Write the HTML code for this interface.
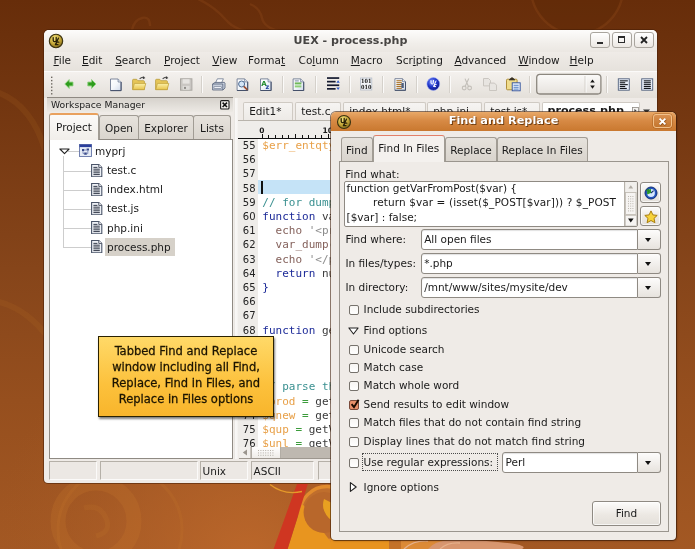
<!DOCTYPE html>
<html lang="en">
<head>
<meta charset="utf-8">
<title>UEX - process.php</title>
<style>
*{box-sizing:border-box;margin:0;padding:0}
html,body{width:695px;height:549px;overflow:hidden}
body{position:relative;font-family:"DejaVu Sans","Liberation Sans",sans-serif;font-size:10.5px;color:#1a1a1a;
 background:#8a471b}
.abs{position:absolute}
#bg{position:absolute;left:0;top:0;width:695px;height:549px}
/* ---------- main window ---------- */
#win{will-change:transform;position:absolute;left:44px;top:30px;width:613px;height:453px;background:#efebe7;border-radius:5px 5px 4px 4px;
 box-shadow:0 0 0 1px rgba(70,30,5,.55)}
#titlebar{position:absolute;left:0;top:0;width:613px;height:22px;border-radius:5px 5px 0 0;
 background:linear-gradient(#fdfcfb,#f1eeea 60%,#ebe7e2)}
#title{position:absolute;left:0;top:4px;width:613px;text-align:center;font-weight:bold;font-size:11.1px;color:#474543;letter-spacing:0}
.wbtn{position:absolute;top:2px;width:20px;height:16px;border:1px solid #a9a59e;border-radius:3px;
 background:linear-gradient(#ffffff,#ece8e3)}
#menubar{position:absolute;left:0;top:22px;width:613px;height:19px;background:linear-gradient(#efebe7,#e6e2dc)}
#menubar span{position:absolute;top:2.4px;white-space:nowrap}
#menubar u{text-decoration:underline;text-underline-offset:1px}
#toolbar{position:absolute;left:0;top:41px;width:613px;height:27px;border-top:1px solid #fbfaf9;
 background:linear-gradient(#f4f1ee,#e4e0da)}
.tsep{position:absolute;top:6px;width:1px;height:15px;background:#c9c4bd;border-right:1px solid #faf9f8;box-sizing:content-box}
/* ---------- workspace manager ---------- */
#wm-head{position:absolute;left:3px;top:67px;width:186px;height:15px;background:linear-gradient(#d6d2cc,#ece9e4);border-top:1.5px solid #8e8982}
#wm-head b{position:absolute;left:4px;top:.7px;font-weight:normal;font-size:9.25px;color:#222}
.tab{position:absolute;border:1px solid #a19c94;border-bottom:none;border-radius:3px 3px 0 0;background:linear-gradient(#e6e2dc,#dad5ce);
 text-align:center;white-space:nowrap}
.tab.on{background:linear-gradient(#fbfaf8,#f1eeea);border-top:2px solid #e9a15e}
#tree{position:absolute;left:5px;top:109px;width:184px;height:320px;background:#fff;border:1px solid #8f8a83}
#tree .row{position:absolute;left:0;height:19px;white-space:nowrap}
/* ---------- editor ---------- */
.etab{position:absolute;top:71.5px;height:19.5px;border:1px solid #cfcac3;border-bottom:none;border-radius:2px 2px 0 0;background:linear-gradient(#f6f4f2,#edeae6);
 padding:2.5px 0 0 5.2px;white-space:nowrap;overflow:hidden}
.etab.on{background:#fff;font-weight:bold;font-size:11.1px;padding-top:1.5px;padding-left:4.8px}
#ruler{position:absolute;left:194px;top:90px;width:419px;height:18.5px;background:#efedea;border-bottom:1px solid #111;border-top:1px solid #b9b4ac}
#gutter{position:absolute;left:194px;top:109px;width:19.5px;height:308px;background:#eeece9}
#code{position:absolute;left:213.5px;top:109px;width:399px;height:308px;background:#fff;overflow:hidden}
.ln,.cl{position:absolute;font-family:"DejaVu Sans Mono","Liberation Mono",monospace;font-size:11px;white-space:pre;line-height:14.2px;height:14.2px}
.ln{left:194px;width:17.6px;text-align:right;color:#222;font-family:"DejaVu Sans","Liberation Sans",sans-serif;font-size:10px}
#hsb{position:absolute;left:194.7px;top:416.6px;width:419px;height:12px;background:#beb8b0;border-bottom:1px solid #9d978f;overflow:hidden}
/* ---------- status ---------- */
.sb{position:absolute;top:431px;height:19px;border:1px solid #b5b0a8;border-right-color:#fbfaf9;border-bottom-color:#fbfaf9;background:#ece8e4;padding:3px 0 0 1.4px;font-size:10.5px}
/* ---------- dialog ---------- */
#dlg{will-change:transform;position:absolute;left:331px;top:112px;width:345px;height:428px;background:#efebe7;border-radius:5px 5px 4px 4px;
 box-shadow:0 0 0 1px rgba(62,28,6,.6),1px 1px 2px rgba(30,10,0,.35)}
#dtitle{position:absolute;left:0;top:0;width:345px;height:18.5px;border-radius:5px 5px 0 0;
 background:linear-gradient(#e9a968,#d78a45 45%,#c9782f)}
#dtitle b{position:absolute;left:0;top:1.5px;width:345px;text-align:center;color:#fff;font-size:11.3px;text-shadow:1px 1px 0 rgba(95,50,10,.85),0 0 1px rgba(95,50,10,.5)}
.dtab{position:absolute;border:1px solid #a19c94;border-bottom:none;border-radius:3px 3px 0 0;background:linear-gradient(#e6e2dc,#d9d4cd);text-align:center;white-space:nowrap}
.dtab.on{background:#f4f1ee;border-top:1.5px solid #e2806a}
#dframe{position:absolute;border:1px solid #9a958e;background:#efebe7}
.btn{position:absolute;border:1px solid #8f8a83;border-radius:3px;background:linear-gradient(#fdfcfb,#ece8e3 55%,#e4e0da);box-shadow:inset 0 0 0 1px rgba(255,255,255,.7)}
.lbl{position:absolute;white-space:nowrap}
.inp{position:absolute;background:#fff;border:1px solid #8f8a83;border-radius:3px 0 0 3px;padding:0 0 0 2.6px;white-space:nowrap;box-shadow:inset 0 1px 1px rgba(0,0,0,.12)}
.dd{position:absolute;border:1px solid #8f8a83;border-left:none;border-radius:0 3px 3px 0;background:linear-gradient(#fdfcfb,#e7e3de)}
.dd:after{content:"";position:absolute;left:7px;top:8.4px;border:3.8px solid transparent;border-top:4.4px solid #111;border-bottom:none}
.cb{position:absolute;width:10.6px;height:10.3px;border:1px solid #76726c;border-radius:2px;background:linear-gradient(#f7f5f3,#fff)}
/* ---------- callout ---------- */
#callout{will-change:transform;position:absolute;left:98px;top:336px;width:176px;height:81px;border:1px solid #2a2100;
 background:linear-gradient(#ffd968,#fcc13c 60%,#f8b52c);box-shadow:1px 1.5px 2px rgba(0,0,0,.5);
 font-family:"DejaVu Sans Condensed","DejaVu Sans","Liberation Sans",sans-serif;font-size:12.8px;line-height:15.9px;text-align:center;color:#1c1400;padding-top:6.4px;
 -webkit-text-stroke:.28px #1c1400;white-space:nowrap}
</style>
</head>
<body>
<svg id="bg" viewBox="0 0 695 549">
 <defs>
  <linearGradient id="g1" x1="0" y1="0" x2="0" y2="1">
   <stop offset="0" stop-color="#672d0a"/><stop offset=".49" stop-color="#86451a"/><stop offset=".73" stop-color="#964f1e"/><stop offset="1" stop-color="#a35823"/>
  </linearGradient>
  <radialGradient id="g2" cx="250" cy="560" r="260" gradientUnits="userSpaceOnUse">
   <stop offset="0" stop-color="#c06a2c" stop-opacity=".85"/><stop offset=".5" stop-color="#b4632a" stop-opacity=".5"/><stop offset="1" stop-color="#a35823" stop-opacity="0"/>
  </radialGradient>
 </defs>
 <rect width="695" height="549" fill="url(#g1)"/>
 <rect width="695" height="549" fill="url(#g2)"/>
 <!-- faint swirls -->
 <g fill="none" stroke="#c87a2c" stroke-opacity=".24">
  <circle cx="96" cy="521" r="38" stroke-width="15"/><path d="M84 508q16-4 22 10t-10 18" stroke-width="5" stroke-opacity=".16"/>
  <circle cx="120" cy="530" r="62" stroke-width="3" stroke-opacity=".18"/>
  <path d="M-10 90q40 10 55 60" stroke-width="6" stroke-opacity=".12"/>
  <path d="M-10 300q35 5 60 40" stroke-width="6" stroke-opacity=".12"/>
 </g>
 <g fill="none" stroke="#854216" stroke-opacity=".45" stroke-width="2.4">
  <path d="M196 -2q18 8 30 22t40 12"/><path d="M250 4q10 4 12 14t20 14"/><path d="M132 30q2-10 10-12t8 8"/>
  <circle cx="577" cy="-12" r="46" fill="#5c2706" fill-opacity=".35"/>
 </g>
 <!-- red stripe and orange swirl, lower middle -->
 <path d="M303.2 522.5l-4.6 26.5h1.6l4.4-26z" fill="#b48a5c"/>
 <circle cx="327" cy="513.5" r="27" fill="#bf6e2d" stroke="#e18b2d" stroke-width="3.4"/>
 <path d="M303.4 505L336 549L287.6 549L301.6 505z" fill="#e8951f"/>
 <path d="M297 484L307.8 484L287.6 549L273.6 549z" fill="#cf3621"/>
 <circle cx="324" cy="512.5" r="20.4" fill="#b8672b"/>
 <path d="M324 499q-4 12 8 22q-2-12 0-18z" fill="#e8a021"/>
 <path d="M270 484.5q14 11 32 7" fill="none" stroke="#e59a2a" stroke-width="1.3"/>
 <!-- strip under dialog -->
 <rect x="331" y="538" width="58" height="11" fill="#e8931f"/>
 <rect x="389" y="538" width="12" height="11" fill="#c47229"/>
 <rect x="401" y="538" width="50" height="11" fill="#dc8a36"/>
 <path d="M428 549q6-8 22-9t48 2t24 7z" fill="#d8966e"/>
 <path d="M404 549q10-9 24-8M440 549q8-7 20-6" fill="none" stroke="#e6b08a" stroke-width="1.4"/>
</svg>

<!-- ================= MAIN WINDOW ================= -->
<div id="win">
 <div id="titlebar">
  <svg class="abs" style="left:4px;top:3px" width="16" height="16" viewBox="0 0 16 16">
   <defs><radialGradient id="ico" cx=".4" cy=".3" r=".8"><stop offset="0" stop-color="#f3e27a"/><stop offset=".55" stop-color="#c2a436"/><stop offset="1" stop-color="#6e5a14"/></radialGradient></defs>
   <circle cx="8" cy="8" r="6.7" fill="url(#ico)" stroke="#3b3210" stroke-width="1.1"/>
   <path d="M5.2 4.6v2.6q0 1.5 1.5 1.5t1.5-1.5V4.4 M10.4 5.2L7.4 11.6 M10.8 9.2h-2.2l-.8 2.4h2.2" fill="none" stroke="#2a2208" stroke-width="1.3" stroke-linecap="round" stroke-linejoin="round"/>
  </svg>
  <div id="title">UEX - process.php</div>
  <div class="wbtn" style="left:546px"><i class="abs" style="left:6px;top:9px;width:6px;height:2px;background:#2b2b2b"></i></div>
  <div class="wbtn" style="left:568px"><i class="abs" style="left:5px;top:3px;width:7px;height:7px;border:1px solid #2b2b2b;border-top-width:2px"></i></div>
  <div class="wbtn" style="left:590px"><svg class="abs" style="left:4px;top:2px" width="10" height="10" viewBox="0 0 10 10"><path d="M2 2l6 6M8 2l-6 6" stroke="#222" stroke-width="1.8" stroke-linecap="butt"/></svg></div>
 </div>
 <div id="menubar"><span style="left:9.5px"><u>F</u>ile</span><span style="left:38px"><u>E</u>dit</span><span style="left:71.2px"><u>S</u>earch</span><span style="left:120px"><u>P</u>roject</span><span style="left:168.3px"><u>V</u>iew</span><span style="left:204.1px">Forma<u>t</u></span><span style="left:254.6px">Co<u>l</u>umn</span><span style="left:306.8px"><u>M</u>acro</span><span style="left:352.1px">Scr<u>i</u>pting</span><span style="left:410.4px"><u>A</u>dvanced</span><span style="left:474.3px"><u>W</u>indow</span><span style="left:525.6px"><u>H</u>elp</span></div>
 <div id="toolbar"></div>
 <svg class="abs" style="left:0;top:41px" width="613" height="28" viewBox="0 0 613 28">
<defs>
<linearGradient id="doc" x1="0" y1="0" x2="1" y2="1"><stop offset="0" stop-color="#ffffff"/><stop offset=".5" stop-color="#f4f7fb"/><stop offset="1" stop-color="#cfd9ea"/></linearGradient>
<linearGradient id="fold" x1="0" y1="0" x2="0" y2="1"><stop offset="0" stop-color="#fbf0a8"/><stop offset="1" stop-color="#e8c44c"/></linearGradient>
<radialGradient id="globe" cx=".4" cy=".35" r=".7"><stop offset="0" stop-color="#8fa4ff"/><stop offset=".5" stop-color="#2238cc"/><stop offset="1" stop-color="#0a1480"/></radialGradient>
<linearGradient id="cmb" x1="0" y1="0" x2="0" y2="1"><stop offset="0" stop-color="#fbfaf9"/><stop offset="1" stop-color="#e6e2dd"/></linearGradient>
<g id="docshape"><path d="M.5.5h7.6l3 3v8.6h-10.6z" fill="url(#doc)" stroke="#6f7b92" stroke-width=".9"/><path d="M11.1 3.5v8.6h-10.6" fill="none" stroke="#44506a" stroke-width="1"/><path d="M8.1.5v3h3" fill="#e8eef8" stroke="#6f7b92" stroke-width=".8"/></g>
</defs>
<rect x="7" y="5.6" width="1.4" height="1.4" fill="#6d6861"/>
<rect x="7" y="8.899999999999999" width="1.4" height="1.4" fill="#6d6861"/>
<rect x="7" y="12.2" width="1.4" height="1.4" fill="#6d6861"/>
<rect x="7" y="15.499999999999998" width="1.4" height="1.4" fill="#6d6861"/>
<rect x="7" y="18.799999999999997" width="1.4" height="1.4" fill="#6d6861"/>
<rect x="7" y="22.1" width="1.4" height="1.4" fill="#6d6861"/>
<path d="M20.8 13l4.4-4.4v2.5h3.8v3.8h-3.8v2.5z" fill="#2f9c1e" stroke="#8fd27f" stroke-width=".9" stroke-linejoin="round"/>
<path d="M52 13l-4.4-4.4v2.5h-3.8v3.8h3.8v2.5z" fill="#2f9c1e" stroke="#8fd27f" stroke-width=".9" stroke-linejoin="round"/>
<use href="#docshape" x="66" y="7.5"/>
<g transform="translate(88,0)"><path d="M.6 18.6V9.2q0-.9.9-.9h3.2l1.2 1.4h5.6q.9 0 .9.9v8z" fill="#e6c658" stroke="#b89a3a" stroke-width=".8"/><path d="M.8 18.6l1.6-6.2h11.4l-1.6 6.2z" fill="url(#fold)" stroke="#c4a440" stroke-width=".8"/><path d="M7.6 8q2-2.4 4.6-1.6" fill="none" stroke="#4a4a4a" stroke-width="1.1"/><path d="M11 5.2l2.4 1.8-2.6 1.2z" fill="#3a3a3a"/></g>
<g transform="translate(111,0)"><path d="M.6 18.6V9.2q0-.9.9-.9h3.2l1.2 1.4h5.6q.9 0 .9.9v8z" fill="#e6c658" stroke="#b89a3a" stroke-width=".8"/><path d="M.8 18.6l1.6-6.2h11.4l-1.6 6.2z" fill="url(#fold)" stroke="#c4a440" stroke-width=".8"/><path d="M7.6 8q2-2.4 4.6-1.6" fill="none" stroke="#4a4a4a" stroke-width="1.1"/><path d="M11 5.2l2.4 1.8-2.6 1.2z" fill="#3a3a3a"/></g>
<g transform="translate(136,7.3)"><rect x=".5" y=".5" width="11.4" height="11.4" fill="#c9c6c2" stroke="#aaa7a2"/><rect x="2.6" y=".9" width="7" height="4.4" fill="#e6e4e1"/><rect x="2.6" y="7.6" width="7" height="3.9" fill="#dddbd8"/><rect x="4" y="8.6" width="2" height="2" fill="#8f8d89"/></g>
<rect x="157" y="5" width="1" height="17" fill="#d5d1cb"/><rect x="158" y="5" width="1" height="17" fill="#fbfaf9"/>
<g transform="translate(168,7)"><path d="M3.4 5.2l2-4.4h6l-2 4.4z" fill="#fff" stroke="#6c7890" stroke-width=".8"/><path d="M.6 6l2.4-1.6h9.4l.6.6v5l-2 2H.6z" fill="#c8d0de" stroke="#56627a" stroke-width=".8"/><path d="M.6 6h10.2v6" fill="none" stroke="#56627a" stroke-width=".8"/><rect x="2" y="8.8" width="7.4" height="1.6" fill="#f5f7fb" stroke="#56627a" stroke-width=".5"/></g>
<g transform="translate(192.6,7.4)"><use href="#docshape"/><circle cx="5" cy="5.6" r="3" fill="#d5e6f7" stroke="#4a6890" stroke-width="1"/><path d="M7.2 8l3.6 3.4" stroke="#9a4a2a" stroke-width="1.6"/></g>
<g transform="translate(216,7.4)"><use href="#docshape"/><text x="1.2" y="7.2" font-family="DejaVu Sans, Liberation Sans, sans-serif" font-weight="bold" font-size="7" fill="#1f8a2a">A</text><text x="5.4" y="10.6" font-family="DejaVu Sans, Liberation Sans, sans-serif" font-weight="bold" font-size="6.4" fill="#1c3f9c">z</text></g>
<rect x="238" y="5" width="1" height="17" fill="#d5d1cb"/><rect x="239" y="5" width="1" height="17" fill="#fbfaf9"/>
<g transform="translate(248.6,7.4)"><use href="#docshape"/><rect x="2.2" y="4" width="6.6" height="2" fill="#6fb85a"/><rect x="2.2" y="7" width="6.6" height="2" fill="#8fcf78"/><rect x="2.2" y="2" width="4" height="1" fill="#7c8aa8"/></g>
<rect x="271" y="5" width="1" height="17" fill="#d5d1cb"/><rect x="272" y="5" width="1" height="17" fill="#fbfaf9"/>
<g transform="translate(283,6.2)"><rect x="0" y="0" width="12.2" height="1.7" fill="#151a30"/><rect x="0" y="3.6" width="8.6" height="1.7" fill="#151a30"/><rect x="0" y="7.2" width="12.2" height="1.7" fill="#151a30"/><rect x="0" y="10.8" width="8.6" height="1.7" fill="#151a30"/><path d="M9.4 5.6h3.4l-1.7-2.6z M9.4 10.2h3.4l-1.7 2.6z" fill="#2b57c4"/></g>
<rect x="305" y="5" width="1" height="17" fill="#d5d1cb"/><rect x="306" y="5" width="1" height="17" fill="#fbfaf9"/>
<g transform="translate(316.2,6.6)"><rect x=".4" y=".4" width="11.2" height="12" fill="#f3f5f9" stroke="#b4bcc9" stroke-width=".8"/><text x=".8" y="5.8" font-family="DejaVu Serif, Liberation Serif, serif" font-weight="bold" font-size="5.6" fill="#111" textLength="10.4" lengthAdjust="spacingAndGlyphs">101</text><text x=".8" y="11.6" font-family="DejaVu Serif, Liberation Serif, serif" font-weight="bold" font-size="5.6" fill="#111" textLength="10.4" lengthAdjust="spacingAndGlyphs">010</text></g>
<rect x="338" y="5" width="1" height="17" fill="#d5d1cb"/><rect x="339" y="5" width="1" height="17" fill="#fbfaf9"/>
<g transform="translate(350.4,7.2)"><use href="#docshape"/><rect x="2" y="2.0" width="5.4" height="1.1" fill="#a9722a"/><rect x="2" y="3.9" width="5.4" height="1.1" fill="#a9722a"/><rect x="2" y="5.8" width="5.4" height="1.1" fill="#a9722a"/><rect x="2" y="7.699999999999999" width="5.4" height="1.1" fill="#a9722a"/><rect x="2" y="9.6" width="5.4" height="1.1" fill="#a9722a"/><rect x="7" y="4.8" width="2.4" height="5" fill="#51607c"/></g>
<rect x="372" y="5" width="1" height="17" fill="#d5d1cb"/><rect x="373" y="5" width="1" height="17" fill="#fbfaf9"/>
<circle cx="389.3" cy="13" r="6.4" fill="url(#globe)" stroke="#9fb0ff" stroke-width=".6"/><path d="M387 9.6v2.2q0 1.2 1.2 1.2t1.2-1.2V9.4 M392 10l-2.4 5.4 M392.2 13.6h-1.6l-.6 2h1.6" fill="none" stroke="#fff" stroke-width="1" stroke-linecap="round"/>
<rect x="405" y="5" width="1" height="17" fill="#d5d1cb"/><rect x="406" y="5" width="1" height="17" fill="#fbfaf9"/>
<g transform="translate(417.6,7)" fill="none" stroke="#c3bfb9" stroke-width="1.1"><path d="M3.4.6l3.4 7.6M7.2.6L3.6 8.2"/><circle cx="2.6" cy="10" r="1.9"/><circle cx="8" cy="10" r="1.9"/></g>
<g transform="translate(439,7)" fill="#e8e5e1" stroke="#c6c2bc" stroke-width=".9"><path d="M.5.5h5l2 2v5.4h-7z"/><path d="M6.5 5.1h5l2 2v5.4h-7z"/></g>
<g transform="translate(462,6.4)"><rect x=".5" y="1.8" width="10.6" height="10.6" rx="1" fill="#f0dc8c" stroke="#a8862c" stroke-width=".9"/><path d="M3 2.6l2.2-2.2h1.6L9 2.6z" fill="#3a3326" stroke="#3a3326" stroke-width=".6"/><rect x="6.2" y="5.4" width="8" height="8" fill="#e6eefa" stroke="#2f4f9a" stroke-width=".9"/><rect x="7.6" y="7.4" width="5" height="1" fill="#5a86c8"/><rect x="7.6" y="9.4" width="5" height="1" fill="#5a86c8"/><rect x="7.6" y="11.2" width="5" height="1" fill="#5a86c8"/></g>
<rect x="485" y="5" width="1" height="17" fill="#d5d1cb"/><rect x="486" y="5" width="1" height="17" fill="#fbfaf9"/>
<rect x="492.7" y="3.4" width="64.2" height="19.6" rx="3.2" fill="url(#cmb)" stroke="#8c877f" stroke-width="1.3"/><rect x="540.6" y="5" width="1" height="16.4" fill="#cfcac3"/><rect x="541.6" y="5" width="1" height="16.4" fill="#fbfaf9"/><path d="M546.2 11.6h4.6l-2.3-3.2z M546.2 14.6h4.6l-2.3 3.2z" fill="#151515"/>
<rect x="562" y="5" width="1" height="17" fill="#d5d1cb"/><rect x="563" y="5" width="1" height="17" fill="#fbfaf9"/>
<g transform="translate(573.8,7.3)"><rect x=".5" y=".5" width="11" height="11.4" fill="#e8eef8" stroke="#51607c" stroke-width=".9"/><rect x="2" y="2.0" width="8" height="1.1" fill="#15171c"/><rect x="2" y="3.9" width="5.4" height="1.1" fill="#15171c"/><rect x="2" y="5.8" width="8" height="1.1" fill="#15171c"/><rect x="2" y="7.699999999999999" width="5.4" height="1.1" fill="#15171c"/><rect x="2" y="9.6" width="7" height="1.1" fill="#15171c"/></g>
<g transform="translate(597.2,7.3)"><rect x=".5" y=".5" width="11" height="11.4" fill="#e8eef8" stroke="#51607c" stroke-width=".9"/><rect x="2.6" y="2.0" width="7" height="1.1" fill="#15171c"/><rect x="2.6" y="3.9" width="7" height="1.1" fill="#15171c"/><rect x="2.6" y="5.8" width="7" height="1.1" fill="#15171c"/><rect x="2.6" y="7.699999999999999" width="7" height="1.1" fill="#15171c"/><rect x="2.6" y="9.6" width="7" height="1.1" fill="#15171c"/></g>
</svg>
 <div id="wm-head"><b>Workspace Manager</b>
  <svg class="abs" style="left:173px;top:2px" width="10" height="10" viewBox="0 0 10 10"><rect x=".6" y=".6" width="8.4" height="8.4" rx="1" fill="#f4f2ef" stroke="#1c1c1c" stroke-width="1.1"/><path d="M2.6 2.6l4.4 4.4M7 2.6L2.6 7" stroke="#111" stroke-width="1.5"/></svg>
 </div>
 <div class="tab on" style="left:5px;top:83px;width:50px;height:27px;padding-top:6px;z-index:2">Project</div>
 <div class="tab" style="left:55px;top:85px;width:40px;height:24px;padding-top:6px">Open</div>
 <div class="tab" style="left:94px;top:85px;width:56px;height:24px;padding-top:6px">Explorer</div>
 <div class="tab" style="left:149px;top:85px;width:38px;height:24px;padding-top:6px">Lists</div>
 <div id="tree">
 <i class="abs" style="left:13px;top:16px;width:1px;height:92px;background:#cdcdcd"></i>
 <i class="abs" style="left:18px;top:11px;width:12px;height:1px;background:#cdcdcd"></i>
 <i class="abs" style="left:13px;top:31px;width:28px;height:1px;background:#cdcdcd"></i>
 <i class="abs" style="left:13px;top:50px;width:28px;height:1px;background:#cdcdcd"></i>
 <i class="abs" style="left:13px;top:69px;width:28px;height:1px;background:#cdcdcd"></i>
 <i class="abs" style="left:13px;top:88px;width:28px;height:1px;background:#cdcdcd"></i>
 <i class="abs" style="left:13px;top:107px;width:28px;height:1px;background:#cdcdcd"></i>
 <svg class="abs" style="left:8.6px;top:7.6px" width="11" height="7" viewBox="0 0 11 7"><path d="M.9 1h9.2L5.5 5.6z" fill="#fff" stroke="#222" stroke-width="1.1" stroke-linejoin="round"/></svg>
 <svg class="abs" style="left:28.6px;top:4.4px" width="13" height="13" viewBox="0 0 13 13"><rect x=".5" y=".5" width="12" height="12" fill="#e6ecf6" stroke="#6576a8" stroke-width=".9"/><rect x=".5" y=".5" width="12" height="2.6" fill="#2b3f9c"/><path d="M3 5h2.2v2H3z M7.6 4.6h2.4v2H7.6z M5.2 8.6h2.6v2.2H5.2z" fill="#3a4a8a"/><path d="M4 7v2.6h1.4 M8.8 6.6v3h-1.2 M5.2 6h2.4" fill="none" stroke="#6c7cae" stroke-width=".8"/></svg>
 <div class="row" style="left:45px;top:5px">myprj</div>
 <svg class="abs" style="left:41px;top:24px" width="12" height="13.4" viewBox="0 0 12 14" preserveAspectRatio="none"><path d="M.6.6h7.2l3 3v9.8H.6z" fill="#eef1f6" stroke="#4a5468" stroke-width="1.1"/><path d="M7.8.6v3h3" fill="#fff" stroke="#3d4658" stroke-width=".9"/><rect x="2.4" y="3.0" width="4" height="1" fill="#2a3140"/><rect x="2.4" y="4.9" width="6.4" height="1" fill="#2a3140"/><rect x="2.4" y="6.8" width="6.4" height="1" fill="#2a3140"/><rect x="2.4" y="8.7" width="6.4" height="1" fill="#2a3140"/><rect x="2.4" y="10.6" width="6.4" height="1" fill="#2a3140"/></svg>
 <div class="row" style="left:57px;top:24.4px">test.c</div>
 <svg class="abs" style="left:41px;top:43px" width="12" height="13.4" viewBox="0 0 12 14" preserveAspectRatio="none"><path d="M.6.6h7.2l3 3v9.8H.6z" fill="#eef1f6" stroke="#4a5468" stroke-width="1.1"/><path d="M7.8.6v3h3" fill="#fff" stroke="#3d4658" stroke-width=".9"/><rect x="2.4" y="3.0" width="4" height="1" fill="#2a3140"/><rect x="2.4" y="4.9" width="6.4" height="1" fill="#2a3140"/><rect x="2.4" y="6.8" width="6.4" height="1" fill="#2a3140"/><rect x="2.4" y="8.7" width="6.4" height="1" fill="#2a3140"/><rect x="2.4" y="10.6" width="6.4" height="1" fill="#2a3140"/></svg>
 <div class="row" style="left:57px;top:43.4px">index.html</div>
 <svg class="abs" style="left:41px;top:62px" width="12" height="13.4" viewBox="0 0 12 14" preserveAspectRatio="none"><path d="M.6.6h7.2l3 3v9.8H.6z" fill="#eef1f6" stroke="#4a5468" stroke-width="1.1"/><path d="M7.8.6v3h3" fill="#fff" stroke="#3d4658" stroke-width=".9"/><rect x="2.4" y="3.0" width="4" height="1" fill="#2a3140"/><rect x="2.4" y="4.9" width="6.4" height="1" fill="#2a3140"/><rect x="2.4" y="6.8" width="6.4" height="1" fill="#2a3140"/><rect x="2.4" y="8.7" width="6.4" height="1" fill="#2a3140"/><rect x="2.4" y="10.6" width="6.4" height="1" fill="#2a3140"/></svg>
 <div class="row" style="left:57px;top:62.3px">test.js</div>
 <svg class="abs" style="left:41px;top:81px" width="12" height="13.4" viewBox="0 0 12 14" preserveAspectRatio="none"><path d="M.6.6h7.2l3 3v9.8H.6z" fill="#eef1f6" stroke="#4a5468" stroke-width="1.1"/><path d="M7.8.6v3h3" fill="#fff" stroke="#3d4658" stroke-width=".9"/><rect x="2.4" y="3.0" width="4" height="1" fill="#2a3140"/><rect x="2.4" y="4.9" width="6.4" height="1" fill="#2a3140"/><rect x="2.4" y="6.8" width="6.4" height="1" fill="#2a3140"/><rect x="2.4" y="8.7" width="6.4" height="1" fill="#2a3140"/><rect x="2.4" y="10.6" width="6.4" height="1" fill="#2a3140"/></svg>
 <div class="row" style="left:57px;top:81.7px">php.ini</div>
 <i class="abs" style="left:55px;top:98px;width:70px;height:18px;background:#d6d1c9"></i>
 <svg class="abs" style="left:41px;top:100px" width="12" height="13.4" viewBox="0 0 12 14" preserveAspectRatio="none"><path d="M.6.6h7.2l3 3v9.8H.6z" fill="#eef1f6" stroke="#4a5468" stroke-width="1.1"/><path d="M7.8.6v3h3" fill="#fff" stroke="#3d4658" stroke-width=".9"/><rect x="2.4" y="3.0" width="4" height="1" fill="#2a3140"/><rect x="2.4" y="4.9" width="6.4" height="1" fill="#2a3140"/><rect x="2.4" y="6.8" width="6.4" height="1" fill="#2a3140"/><rect x="2.4" y="8.7" width="6.4" height="1" fill="#2a3140"/><rect x="2.4" y="10.6" width="6.4" height="1" fill="#2a3140"/></svg>
 <div class="row" style="left:57px;top:100.8px">process.php</div>
 </div>
<div class="etab" style="left:199px;width:50px">Edit1*</div>
 <div class="etab" style="left:251px;width:46px">test.c</div>
 <div class="etab" style="left:299px;width:83px">index.html*</div>
 <div class="etab" style="left:383px;width:54.5px">php.ini</div>
 <div class="etab" style="left:440px;width:56px">test.js*</div>
 <div class="etab on" style="left:497.7px;width:98px">process.php</div>
 <svg class="abs" style="left:587px;top:75px" width="22" height="12" viewBox="0 0 22 12"><rect x="1.5" y="2.5" width="6" height="6" fill="#f4f2ef" stroke="#8f8a83" stroke-width=".8"/><path d="M3.4 4l2.2 1.6-2.2 1.6z" fill="#444"/><path d="M12 4.6h7l-3.5 3.6z" fill="#333"/></svg>
 <div id="ruler"><i class="abs" style="left:23.8px;bottom:0;width:1px;height:4px;background:#111"></i><i class="abs" style="left:30.4px;bottom:0;width:1px;height:3px;background:#111"></i><i class="abs" style="left:37.0px;bottom:0;width:1px;height:3px;background:#111"></i><i class="abs" style="left:43.7px;bottom:0;width:1px;height:3px;background:#111"></i><i class="abs" style="left:50.3px;bottom:0;width:1px;height:3px;background:#111"></i><i class="abs" style="left:56.9px;bottom:0;width:1px;height:4px;background:#111"></i><i class="abs" style="left:63.5px;bottom:0;width:1px;height:3px;background:#111"></i><i class="abs" style="left:70.1px;bottom:0;width:1px;height:3px;background:#111"></i><i class="abs" style="left:76.8px;bottom:0;width:1px;height:3px;background:#111"></i><i class="abs" style="left:83.4px;bottom:0;width:1px;height:3px;background:#111"></i><i class="abs" style="left:90.0px;bottom:0;width:1px;height:4px;background:#111"></i><i class="abs" style="left:96.6px;bottom:0;width:1px;height:3px;background:#111"></i><span class="abs" style="left:21.3px;top:5px;font-size:7.5px;font-weight:bold;line-height:10px">0</span><span class="abs" style="left:84.5px;top:5px;font-size:7.5px;font-weight:bold;line-height:10px">10</span></div>
 <i class="abs" style="left:189.5px;top:68px;width:4px;height:361px;background:linear-gradient(90deg,#e2ded8,#faf9f8 40%,#f3f1ee)"></i>
 <div id="gutter"></div>
 <div id="code"><i class="abs" style="left:0;top:41.1px;width:400px;height:14.2px;background:#c5e3f7"></i><i class="abs" style="left:3.8px;top:41.7px;width:1.6px;height:13px;background:#111"></i><div class="cl" style="left:4.8px;top:-0.1px"><span style="color:#e8a048">$err_entqty</span><span style="color:#3a3a3a"> = </span><span style="color:#8c8c8c">''</span><span style="color:#3a3a3a">;</span></div><div class="cl" style="left:4.8px;top:56.7px"><span style="color:#3a9090">// for dumping vars</span></div><div class="cl" style="left:4.8px;top:70.9px"><span style="color:#1c2a98">function</span><span style="color:#3a3a3a"> vardump($v) {</span></div><div class="cl" style="left:4.8px;top:85.1px">  <span style="color:#85625c">echo</span> <span style="color:#8c8c8c">'&lt;pre&gt;';</span></div><div class="cl" style="left:4.8px;top:99.3px">  <span style="color:#85625c">var_dump</span><span style="color:#3a3a3a">($v);</span></div><div class="cl" style="left:4.8px;top:113.5px">  <span style="color:#85625c">echo</span> <span style="color:#8c8c8c">'&lt;/pre&gt;';</span></div><div class="cl" style="left:4.8px;top:127.7px">  <span style="color:#1c2a98">return</span><span style="color:#3a3a3a"> null;</span></div><div class="cl" style="left:4.8px;top:141.9px"><span style="color:#1c2a98">}</span></div><div class="cl" style="left:4.8px;top:184.5px"><span style="color:#1c2a98">function</span><span style="color:#3a3a3a"> getVarFromPost($var) {</span></div><div class="cl" style="left:4.8px;top:241.3px"><span style="color:#3a9090">// parse the vars</span></div><div class="cl" style="left:4.8px;top:255.5px"><span style="color:#e8a048">$prod</span> <span style="color:#3c9c3c">=</span><span style="color:#3a3a3a"> getVarFromPost</span></div><div class="cl" style="left:4.8px;top:269.7px"><span style="color:#e8a048">$qnew</span> <span style="color:#3c9c3c">=</span><span style="color:#3a3a3a"> getVarFromPost</span></div><div class="cl" style="left:4.8px;top:283.9px"><span style="color:#e8a048">$qup</span> <span style="color:#3c9c3c">=</span><span style="color:#3a3a3a"> getVarFromPost</span></div><div class="cl" style="left:4.8px;top:298.1px"><span style="color:#e8a048">$unl</span> <span style="color:#3c9c3c">=</span><span style="color:#3a3a3a"> getVarFromPost</span></div></div>
 <div class="ln" style="top:108.9px">55</div><div class="ln" style="top:123.1px">56</div><div class="ln" style="top:137.3px">57</div><div class="ln" style="top:151.5px">58</div><div class="ln" style="top:165.7px">59</div><div class="ln" style="top:179.9px">60</div><div class="ln" style="top:194.1px">61</div><div class="ln" style="top:208.3px">62</div><div class="ln" style="top:222.5px">63</div><div class="ln" style="top:236.7px">64</div><div class="ln" style="top:250.9px">65</div><div class="ln" style="top:265.1px">66</div><div class="ln" style="top:279.3px">67</div><div class="ln" style="top:293.5px">68</div><div class="ln" style="top:307.7px">69</div><div class="ln" style="top:321.9px">70</div><div class="ln" style="top:336.1px">71</div><div class="ln" style="top:350.3px">72</div><div class="ln" style="top:364.5px">73</div><div class="ln" style="top:378.7px">74</div><div class="ln" style="top:392.9px">75</div><div class="ln" style="top:407.1px">76</div>
 <div id="hsb"><i class="abs" style="left:0;top:0;width:12px;height:11px;background:#f1efec;border-right:1px solid #c9c4bd"></i><svg class="abs" style="left:3px;top:2.5px" width="6" height="7" viewBox="0 0 6 7"><path d="M5 .6v5.8L.8 3.5z" fill="#9a958e"/></svg><i class="abs" style="left:12px;top:0;width:30px;height:11px;background:linear-gradient(#ffffff,#efece8);border:1px solid #b2ada5;border-top:none;border-bottom:none"></i><svg class="abs" style="left:18px;top:2px" width="18" height="8" viewBox="0 0 18 8"><rect x="1.0" y="1.0" width="1" height="1" fill="#b5b0a8"/><rect x="1.0" y="3.4" width="1" height="1" fill="#b5b0a8"/><rect x="1.0" y="5.8" width="1" height="1" fill="#b5b0a8"/><rect x="3.4" y="1.0" width="1" height="1" fill="#b5b0a8"/><rect x="3.4" y="3.4" width="1" height="1" fill="#b5b0a8"/><rect x="3.4" y="5.8" width="1" height="1" fill="#b5b0a8"/><rect x="5.8" y="1.0" width="1" height="1" fill="#b5b0a8"/><rect x="5.8" y="3.4" width="1" height="1" fill="#b5b0a8"/><rect x="5.8" y="5.8" width="1" height="1" fill="#b5b0a8"/><rect x="8.2" y="1.0" width="1" height="1" fill="#b5b0a8"/><rect x="8.2" y="3.4" width="1" height="1" fill="#b5b0a8"/><rect x="8.2" y="5.8" width="1" height="1" fill="#b5b0a8"/><rect x="10.6" y="1.0" width="1" height="1" fill="#b5b0a8"/><rect x="10.6" y="3.4" width="1" height="1" fill="#b5b0a8"/><rect x="10.6" y="5.8" width="1" height="1" fill="#b5b0a8"/><rect x="13.0" y="1.0" width="1" height="1" fill="#b5b0a8"/><rect x="13.0" y="3.4" width="1" height="1" fill="#b5b0a8"/><rect x="13.0" y="5.8" width="1" height="1" fill="#b5b0a8"/><rect x="15.399999999999999" y="1.0" width="1" height="1" fill="#b5b0a8"/><rect x="15.399999999999999" y="3.4" width="1" height="1" fill="#b5b0a8"/><rect x="15.399999999999999" y="5.8" width="1" height="1" fill="#b5b0a8"/></svg></div>
 <div class="sb" style="left:5.2px;width:48px"></div>
 <div class="sb" style="left:56.2px;width:97.5px"></div>
 <div class="sb" style="left:156.2px;width:48px">Unix</div>
 <div class="sb" style="left:207.2px;width:63px">ASCII</div>
 <div class="sb" style="left:273.5px;width:40px"></div>
</div>

<!-- ================= DIALOG ================= -->
<div id="dlg">
 <div id="dtitle"><b>Find and Replace</b>
 <svg class="abs" style="left:5px;top:1.5px" width="16" height="16" viewBox="0 0 16 16"><circle cx="8" cy="8" r="6.5" fill="url(#ico)" stroke="#3b3210" stroke-width="1.1"/><path d="M5.2 4.6v2.6q0 1.5 1.5 1.5t1.5-1.5V4.4 M10.4 5.2L7.4 11.6 M10.8 9.2h-2.2l-.8 2.4h2.2" fill="none" stroke="#2a2208" stroke-width="1.3" stroke-linecap="round" stroke-linejoin="round"/></svg>
 <div class="abs" style="left:321.8px;top:2px;width:19.5px;height:13.5px;border:1px solid #f1c08a;border-radius:3px;background:linear-gradient(#d99050,#c4762e);box-shadow:0 0 0 .5px #a8601e"><svg class="abs" style="left:4.5px;top:1.5px" width="9" height="9" viewBox="0 0 9 9"><path d="M1.6 1.6l5.8 5.8M7.4 1.6L1.6 7.4" stroke="#6a3408" stroke-width="2.6" opacity=".55" transform="translate(.4,.6)"/><path d="M1.6 1.6l5.8 5.8M7.4 1.6L1.6 7.4" stroke="#fff" stroke-width="1.9"/></svg></div>
 </div>
 <div class="dtab" style="left:9.6px;top:24.6px;width:32.5px;height:24.6px;padding-top:6px">Find</div>
 <div class="dtab on" style="left:41.8px;top:23px;width:72px;height:27px;padding-top:6px;z-index:2">Find In Files</div>
 <div class="dtab" style="left:113.8px;top:24.6px;width:52.5px;height:24.6px;padding-top:6px">Replace</div>
 <div class="dtab" style="left:165.5px;top:24.6px;width:91.5px;height:24.6px;padding-top:6px">Replace In Files</div>
 <div id="dframe" style="left:8.1px;top:48.6px;width:329.8px;height:371.6px"></div>
 <div class="lbl" style="left:14.3px;top:55.5px">Find what:</div>
 <div class="abs" style="left:13.4px;top:69.2px;width:293.6px;height:46.0px;background:#fff;border:1px solid #8f8a83;border-radius:2px;overflow:hidden">
 <div class="lbl" style="left:1.2px;top:-1.1px;line-height:14.4px">function getVarFromPost($var) {</div>
 <div class="lbl" style="left:27.6px;top:13.3px;line-height:14.4px;letter-spacing:.1px">return $var = (isset($_POST[$var])) ? $_POST</div>
 <div class="lbl" style="left:1.2px;top:27.7px;line-height:14.4px">[$var] : false;</div>
 <div class="abs" style="right:0;top:0;width:12.5px;height:100%;background:#e3dfd9;border-left:1px solid #b7b2aa"><svg class="abs" style="left:0;top:0" width="12" height="44" viewBox="0 0 12 44"><rect x=".5" y="0" width="11" height="10" fill="#f1efec"/><path d="M3.4 6.6h4.8L5.8 3.2z" fill="#b1aca4"/><rect x=".5" y="10.5" width="10.5" height="22" fill="#f6f4f2" stroke="#bdb8b0" stroke-width=".8"/><rect x="3.0" y="14.0" width="1" height="1" fill="#bbb6ae"/><rect x="3.0" y="16.4" width="1" height="1" fill="#bbb6ae"/><rect x="3.0" y="18.8" width="1" height="1" fill="#bbb6ae"/><rect x="3.0" y="21.2" width="1" height="1" fill="#bbb6ae"/><rect x="3.0" y="23.6" width="1" height="1" fill="#bbb6ae"/><rect x="3.0" y="26.0" width="1" height="1" fill="#bbb6ae"/><rect x="3.0" y="28.4" width="1" height="1" fill="#bbb6ae"/><rect x="5.2" y="14.0" width="1" height="1" fill="#bbb6ae"/><rect x="5.2" y="16.4" width="1" height="1" fill="#bbb6ae"/><rect x="5.2" y="18.8" width="1" height="1" fill="#bbb6ae"/><rect x="5.2" y="21.2" width="1" height="1" fill="#bbb6ae"/><rect x="5.2" y="23.6" width="1" height="1" fill="#bbb6ae"/><rect x="5.2" y="26.0" width="1" height="1" fill="#bbb6ae"/><rect x="5.2" y="28.4" width="1" height="1" fill="#bbb6ae"/><rect x="7.4" y="14.0" width="1" height="1" fill="#bbb6ae"/><rect x="7.4" y="16.4" width="1" height="1" fill="#bbb6ae"/><rect x="7.4" y="18.8" width="1" height="1" fill="#bbb6ae"/><rect x="7.4" y="21.2" width="1" height="1" fill="#bbb6ae"/><rect x="7.4" y="23.6" width="1" height="1" fill="#bbb6ae"/><rect x="7.4" y="26.0" width="1" height="1" fill="#bbb6ae"/><rect x="7.4" y="28.4" width="1" height="1" fill="#bbb6ae"/><rect x=".5" y="33.5" width="11" height="10.5" fill="#f6f4f2" stroke="#bdb8b0" stroke-width=".6"/><path d="M3 36.6h5.6L5.8 40.4z" fill="#111"/></svg></div>
 </div>
 <div class="btn" style="left:308.6px;top:70px;width:21.2px;height:20.6px"><svg class="abs" style="left:3px;top:2.6px" width="14" height="14" viewBox="0 0 14 14"><circle cx="7" cy="7" r="6" fill="#2253bd" stroke="#123078" stroke-width="1"/><circle cx="7" cy="7" r="3.9" fill="#d4e6ff"/><path d="M7 7L3.2 8.4A3.9 3.9 0 0 1 7 3.1z" fill="#2e9c2c"/><path d="M7 7l2.6-2.4" stroke="#14306a" stroke-width="1.1"/><path d="M2 4.4l3-1.6-.6 3z" fill="#2e9c2c" stroke="#1a701a" stroke-width=".4"/></svg></div>
 <div class="btn" style="left:308.6px;top:93.8px;width:21.2px;height:20.6px"><svg class="abs" style="left:3px;top:2.8px" width="14" height="14" viewBox="0 0 14 14"><path d="M7 .9l1.9 4 4.3.5-3.2 3 .9 4.3L7 10.5l-3.9 2.2.9-4.3-3.2-3 4.3-.5z" fill="#f7d33a" stroke="#a97d0c" stroke-width="1" stroke-linejoin="round"/></svg></div>
 <div class="lbl" style="left:14.4px;top:120.7px">Find where:</div>
 <div class="inp" style="left:89.6px;top:116.7px;width:217.6px;height:21.3px;line-height:19.3px">All open files</div><div class="dd" style="left:307.2px;top:116.7px;width:22.6px;height:21.3px"></div>
 <div class="lbl" style="left:14.4px;top:144.8px">In files/types:</div>
 <div class="inp" style="left:89.6px;top:140.9px;width:217.6px;height:21.3px;line-height:19.3px">*.php</div><div class="dd" style="left:307.2px;top:140.9px;width:22.6px;height:21.3px"></div>
 <div class="lbl" style="left:14.4px;top:169.2px">In directory:</div>
 <div class="inp" style="left:89.6px;top:165.0px;width:217.6px;height:21.3px;line-height:19.3px">/mnt/www/sites/mysite/dev</div><div class="dd" style="left:307.2px;top:165.0px;width:22.6px;height:21.3px"></div>
 <div class="cb" style="left:17.6px;top:192.7px"></div><div class="lbl" style="left:32.6px;top:190.7px">Include subdirectories</div>
 <svg class="abs" style="left:16.8px;top:214.8px" width="11" height="8" viewBox="0 0 11 8"><path d="M.9 1h9.2L5.5 7z" fill="#fff" stroke="#222" stroke-width="1.1" stroke-linejoin="round"/></svg>
 <div class="lbl" style="left:32.6px;top:212.3px">Find options</div>
 <div class="cb" style="left:17.6px;top:232.6px"></div><div class="lbl" style="left:32.6px;top:230.6px">Unicode search</div>
 <div class="cb" style="left:17.6px;top:250.8px"></div><div class="lbl" style="left:32.6px;top:248.8px">Match case</div>
 <div class="cb" style="left:17.6px;top:269.1px"></div><div class="lbl" style="left:32.6px;top:267.1px">Match whole word</div>
 <div class="cb" style="left:17.6px;top:287.7px;background:#e8906a;border-color:#7a4a3a"><svg class="abs" style="left:-1px;top:-2.5px" width="12" height="12" viewBox="0 0 12 12"><path d="M2.6 6.2l2.4 3L9.6 1.8" fill="none" stroke="#1a0a00" stroke-width="1.9"/></svg></div><div class="lbl" style="left:32.6px;top:285.7px">Send results to edit window</div>
 <div class="cb" style="left:17.6px;top:306.2px"></div><div class="lbl" style="left:32.6px;top:304.2px">Match files that do not contain find string</div>
 <div class="cb" style="left:17.6px;top:324.5px"></div><div class="lbl" style="left:32.6px;top:322.5px">Display lines that do not match find string</div>
 <div class="cb" style="left:17.6px;top:345.7px"></div><div class="lbl" style="left:32.6px;top:343.7px">Use regular expressions:</div>
 <div class="abs" style="left:31.3px;top:341.2px;width:135.3px;height:17.4px;border:1px dotted #4a4a4a"></div>
 <div class="inp" style="left:171px;top:339.8px;width:136.2px;height:21.6px;line-height:19.6px">Perl</div>
 <div class="dd" style="left:307.2px;top:339.8px;width:22.6px;height:21.6px"></div>
 <svg class="abs" style="left:17.6px;top:369.2px" width="9" height="12" viewBox="0 0 9 12"><path d="M1.4 1.6v8.8L7.2 6z" fill="#fff" stroke="#222" stroke-width="1.1" stroke-linejoin="round"/></svg>
 <div class="lbl" style="left:32.6px;top:368.5px">Ignore options</div>
 <div class="btn" style="left:261px;top:389.4px;width:68.8px;height:25.0px;text-align:center;line-height:23.0px">Find</div>
</div>

<!-- ================= CALLOUT ================= -->
<div id="callout">Tabbed Find and Replace<br>window including all Find,<br>Replace, Find in Files, and<br>Replace in Files options</div>
</body>
</html>
